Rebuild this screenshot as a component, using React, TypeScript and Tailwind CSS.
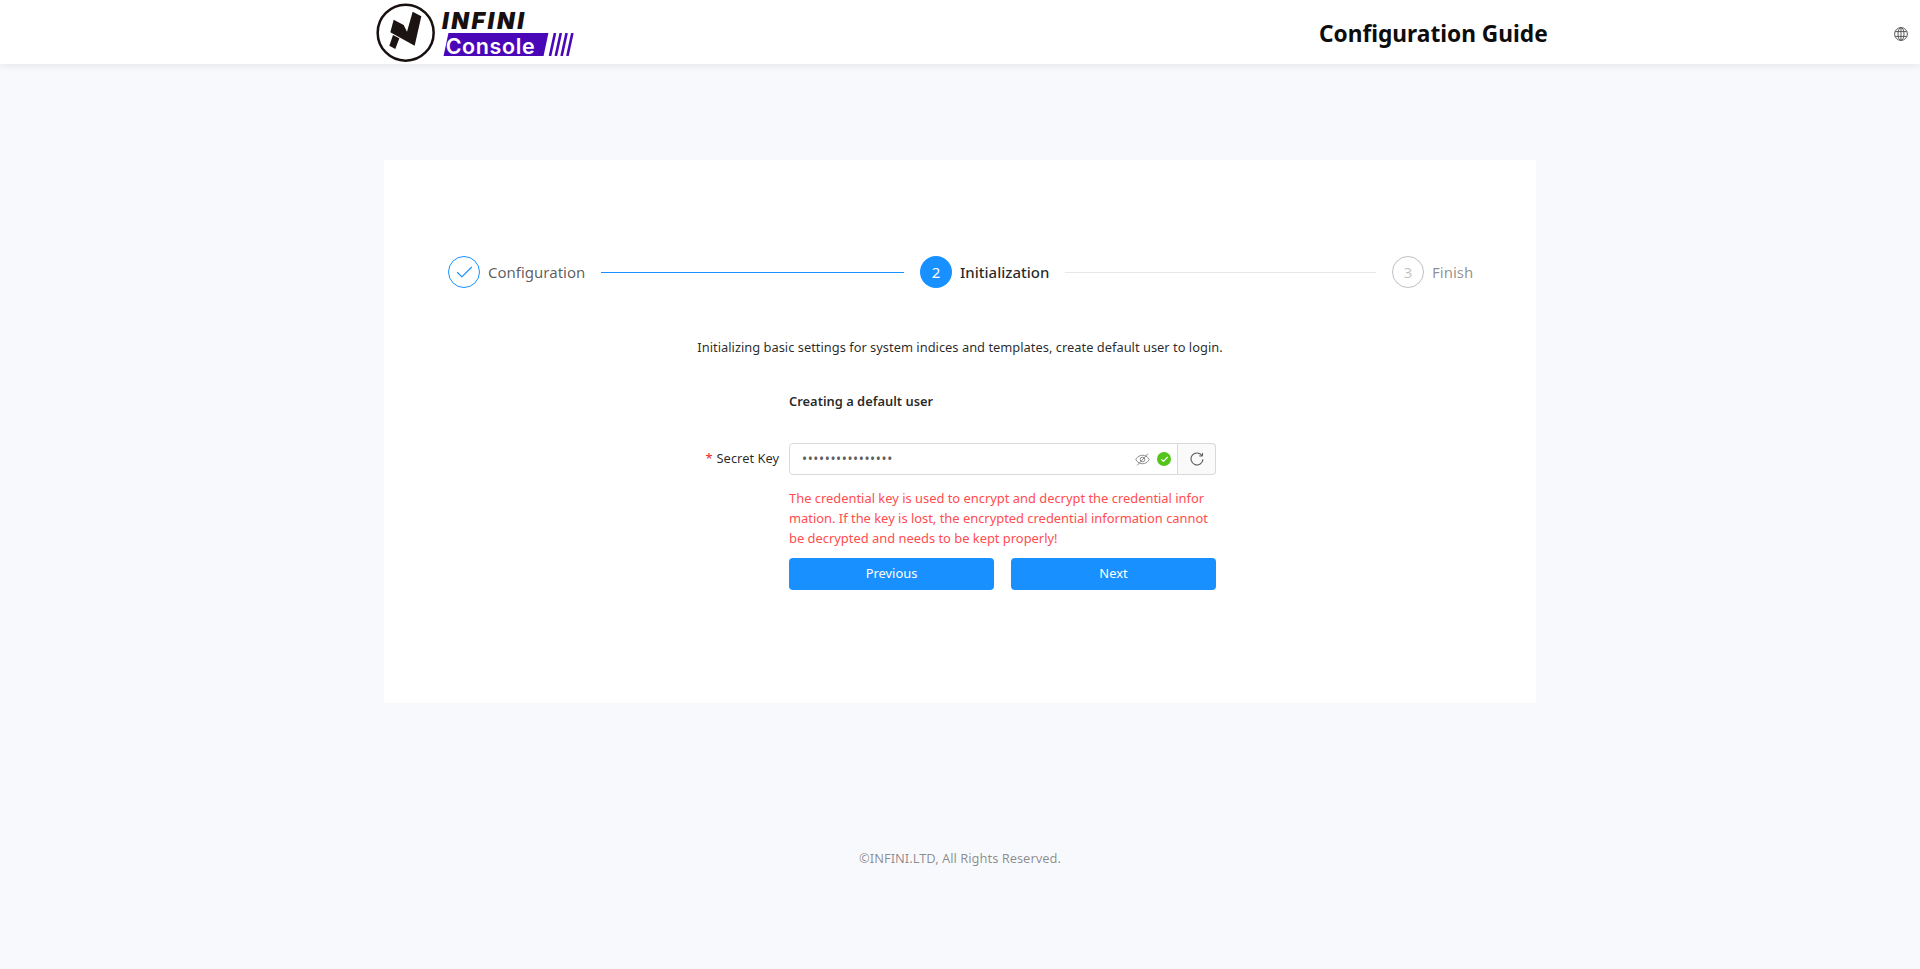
import { Check } from "lucide-react";

function Logo() {
  return (
    <div className="flex items-center h-16">
      <svg width="65" height="66" viewBox="0 0 195 198" className="shrink-0">
        <circle cx="101" cy="101" r="84" fill="none" stroke="#17100f" strokeWidth="7.5" />
        <path d="M65 62 L95 78 L105 98 L122 38 L148 52 L128 140 L55 100 Z" fill="#1c1412" />
        <path d="M63 108 L82 118 L70 150 L52 140 Z" fill="#1c1412" />
      </svg>
      <div className="ml-[5px] flex flex-col w-[136px]">
        <span className="font-['Inter',sans-serif] text-[23px] leading-[22px] font-black italic tracking-[2.6px] text-[#17100f] mt-[1px]">
          INFINI
        </span>
        <div className="flex items-center mt-[1px] h-[23px]">
          <div className="ml-[4px] w-[100px] h-[23px] bg-[#4a07b8] -skew-x-[12deg]">
            <div className="skew-x-[12deg] font-['Inter',sans-serif] text-[21.5px] leading-[26px] font-semibold tracking-[0.6px] text-white">
              Console
            </div>
          </div>
          <svg width="28" height="23" viewBox="0 0 28 23" className="ml-[1px]">
            <path d="M8 0 L3 23 M13.8 0 L8.8 23 M19.6 0 L14.6 23 M25.4 0 L20.4 23" stroke="#4a07b8" strokeWidth="2.6" />
          </svg>
        </div>
      </div>
    </div>
  );
}

function GlobeIcon() {
  return (
    <svg width="14" height="14" viewBox="0 0 14 14" fill="none" stroke="#595959" strokeWidth="1">
      <circle cx="7" cy="7" r="6.4" />
      <ellipse cx="7" cy="7" rx="3" ry="6.4" />
      <path d="M7 0.6 V13.4 M1.2 4.6 H12.8 M1.2 9.4 H12.8" />
    </svg>
  );
}

function EyeInvisible() {
  return (
    <svg width="15" height="13" viewBox="0 0 15 13" fill="none" stroke="#8c8c8c" strokeWidth="1">
      <path d="M0.7 6.5 C2.8 3.2 5 2.3 7.5 2.3 C10 2.3 12.2 3.2 14.3 6.5 C12.2 9.8 10 10.7 7.5 10.7 C5 10.7 2.8 9.8 0.7 6.5 Z" />
      <circle cx="7.5" cy="6.5" r="2.3" />
      <path d="M13 0.6 L2.2 12.4" />
    </svg>
  );
}

function ReloadIcon() {
  return (
    <svg width="14" height="14" viewBox="0 0 14 14" fill="none" stroke="#595959" strokeWidth="1.1">
      <path d="M12 3.6 A6 6 0 1 0 13 7.4" />
      <path d="M12.6 0.9 L12.4 4.1 L9.2 3.9" strokeWidth="1" />
    </svg>
  );
}

function StepIcon({ n, state }: { n: number; state: "done" | "active" | "wait" }) {
  if (state === "done")
    return (
      <div className="w-8 h-8 rounded-full border border-[#1890ff] flex items-center justify-center text-[#1890ff] shrink-0">
        <Check size={21} strokeWidth={1.3} />
      </div>
    );
  if (state === "active")
    return (
      <div className="w-8 h-8 rounded-full bg-[#1890ff] flex items-center justify-center text-white text-[15px] shrink-0">
        {n}
      </div>
    );
  return (
    <div className="w-8 h-8 rounded-full border border-black/25 flex items-center justify-center text-black/25 text-[15px] shrink-0">
      {n}
    </div>
  );
}

function Steps() {
  return (
    <div className="flex items-center">
      <div className="flex-1 flex items-center mr-4">
        <StepIcon n={1} state="done" />
        <span className="ml-2 text-[15px] text-black/65">Configuration</span>
        <div className="flex-1 h-px bg-[#1890ff] ml-4" />
      </div>
      <div className="flex-1 flex items-center mr-4">
        <StepIcon n={2} state="active" />
        <span className="ml-2 text-[15px] font-medium text-black/85">Initialization</span>
        <div className="flex-1 h-px bg-[#e8e8e8] ml-4" />
      </div>
      <div className="w-20 flex items-center">
        <StepIcon n={3} state="wait" />
        <span className="ml-2 text-[15px] text-black/45">Finish</span>
      </div>
    </div>
  );
}

function SecretKeyForm() {
  return (
    <div className="flex flex-col">
      <div className="ml-[405px] text-[12.9px] leading-5 font-semibold text-black/85">Creating a default user</div>
      <div className="flex mt-[32px]">
        <label className="w-[395px] h-8 flex items-center justify-end text-[12.9px] text-black/85">
          <span className="text-[#f5222d] mr-1">*</span>
          Secret Key
        </label>
        <div className="ml-[10px] w-[427px]">
          <div className="flex h-8">
            <div className="flex-1 flex items-center border border-[#d9d9d9] rounded-l pl-3 pr-[6px] bg-white">
              <span className="flex-1 text-[13.5px] text-black/65 tracking-[0.6px]">••••••••••••••••</span>
              <EyeInvisible />
              <div className="ml-[7px] w-[14px] h-[14px] rounded-full bg-[#52c41a] flex items-center justify-center text-white">
                <Check size={9} strokeWidth={3} />
              </div>
            </div>
            <div className="w-[38px] flex items-center justify-center border border-l-0 border-[#d9d9d9] rounded-r bg-[#fafafa]">
              <ReloadIcon />
            </div>
          </div>
          <p className="mt-[13px] text-[12.9px] leading-5 text-[#ff4d4f] break-all">
            The credential key is used to encrypt and decrypt the credential information. If the key is lost, the encrypted credential information cannot be decrypted and needs to be kept properly!
          </p>
          <div className="mt-[10px] flex gap-[17px]">
            <button className="flex-1 h-8 rounded bg-[#1890ff] text-white text-[12.9px]">Previous</button>
            <button className="flex-1 h-8 rounded bg-[#1890ff] text-white text-[12.9px]">Next</button>
          </div>
        </div>
      </div>
    </div>
  );
}

export default function App() {
  return (
    <div className="min-h-[969px] bg-[#f8f9fc] flex flex-col font-['Noto_Sans',sans-serif]">
      <header className="h-16 bg-white shadow-[0_2px_8px_rgba(0,21,41,0.08)] flex items-center pl-[372px] pr-[12px]">
        <Logo />
        <h1 className="ml-[741px] mt-[4px] text-[22.7px] font-bold text-[#0d0d0d]">Configuration Guide</h1>
        <div className="ml-auto mt-[3px]">
          <GlobeIcon />
        </div>
      </header>
      <main className="mt-24 mx-auto w-[1152px] h-[543px] bg-white pt-24 px-16">
        <Steps />
        <p className="mt-[49px] text-center text-[12.9px] leading-5 text-black/85">
          Initializing basic settings for system indices and templates, create default user to login.
        </p>
        <div className="mt-[34px] -mx-16">
          <SecretKeyForm />
        </div>
      </main>
      <footer className="mt-[145px] text-center text-[12.9px] leading-5 text-black/45">
        ©INFINI.LTD, All Rights Reserved.
      </footer>
    </div>
  );
}
